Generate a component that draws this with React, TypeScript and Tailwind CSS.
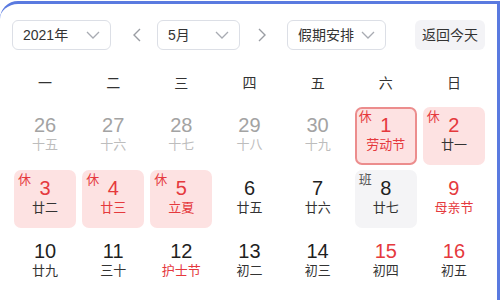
import React from "react";

type Day = {
  n: number;
  lunar: string;
  muted?: boolean;
  redNum?: boolean;
  redLunar?: boolean;
  tag?: "休" | "班";
  selected?: boolean;
};

const WEEK = ["一", "二", "三", "四", "五", "六", "日"];

const DAYS: Day[] = [
  { n: 26, lunar: "十五", muted: true },
  { n: 27, lunar: "十六", muted: true },
  { n: 28, lunar: "十七", muted: true },
  { n: 29, lunar: "十八", muted: true },
  { n: 30, lunar: "十九", muted: true },
  { n: 1, lunar: "劳动节", redNum: true, redLunar: true, tag: "休", selected: true },
  { n: 2, lunar: "廿一", redNum: true, tag: "休" },
  { n: 3, lunar: "廿二", redNum: true, tag: "休" },
  { n: 4, lunar: "廿三", redNum: true, redLunar: true, tag: "休" },
  { n: 5, lunar: "立夏", redNum: true, redLunar: true, tag: "休" },
  { n: 6, lunar: "廿五" },
  { n: 7, lunar: "廿六" },
  { n: 8, lunar: "廿七", tag: "班" },
  { n: 9, lunar: "母亲节", redNum: true, redLunar: true },
  { n: 10, lunar: "廿九" },
  { n: 11, lunar: "三十" },
  { n: 12, lunar: "护士节", redLunar: true },
  { n: 13, lunar: "初二" },
  { n: 14, lunar: "初三" },
  { n: 15, lunar: "初四", redNum: true },
  { n: 16, lunar: "初五", redNum: true },
];

const Chevron = () => (
  <svg width="14" height="8" viewBox="0 0 14 8" fill="none">
    <path d="M1 1 L7 7 L13 1" stroke="#a8abb2" strokeWidth="1.3" />
  </svg>
);

const Select = ({ label, w }: { label: string; w: string }) => (
  <div className={`${w} h-[30px] border border-[#dcdfe6] rounded-[6px] flex items-center justify-between pl-[10px] pr-[10px] text-[14px] text-[#333]`}>
    <span>{label}</span>
    <Chevron />
  </div>
);

const Arrow = ({ dir }: { dir: "l" | "r" }) => (
  <div className="w-[20px] h-[30px] flex items-center justify-center">
    <svg width="8" height="14" viewBox="0 0 8 14" fill="none">
      <path d={dir === "l" ? "M7 1 L1 7 L7 13" : "M1 1 L7 7 L1 13"} stroke="#9a9da3" strokeWidth="1.4" />
    </svg>
  </div>
);

function Cell({ d }: { d: Day }) {
  const bg = d.tag === "休" ? "bg-[#fde2e2]" : d.tag === "班" ? "bg-[#f4f4f6]" : "";
  const border = d.selected ? "border-2 border-[#ec8d8d]" : "border-2 border-transparent";
  const numColor = d.muted ? "text-[#a3a3a3]" : d.redNum ? "text-[#e5393d]" : "text-[#1f1f1f]";
  const lunarColor = d.muted ? "text-[#bdbdbd]" : d.redLunar ? "text-[#e5393d]" : "text-[#333]";
  return (
    <div className={`relative h-[58px] rounded-[7px] ${bg} ${border} flex flex-col items-center pt-[6px]`}>
      {d.tag && (
        <span className={`absolute left-[2px] top-[0px] text-[13px] leading-[16px] ${d.tag === "休" ? "text-[#e5393d]" : "text-[#555]"}`}>
          {d.tag}
        </span>
      )}
      <span className={`text-[20px] leading-[20px] ${numColor}`}>{d.n}</span>
      <span className={`text-[13px] leading-[18px] mt-[1px] ${lunarColor}`}>{d.lunar}</span>
    </div>
  );
}

export default function App() {
  return (
    <div className="w-[500px] h-[300px] overflow-hidden bg-white pt-[1px]" style={{ fontFamily: '"Liberation Sans", "Noto Sans CJK SC", sans-serif' }}>
      <div className="h-[320px] border-t-[3px] border-r-[3px] border-[#5a7ae0] rounded-tl-[18px] pt-[16px] pl-[12px] pr-[12px]">
        <div className="flex items-center">
          <Select label="2021年" w="w-[99px]" />
          <div className="ml-[16px]"><Arrow dir="l" /></div>
          <div className="ml-[10px]"><Select label="5月" w="w-[83px]" /></div>
          <div className="ml-[12px]"><Arrow dir="r" /></div>
          <div className="ml-[15px]"><Select label="假期安排" w="w-[99px]" /></div>
          <div className="ml-auto w-[70px] h-[30px] rounded-[6px] bg-[#f3f3f6] flex items-center justify-center text-[14px] text-[#333]">
            返回今天
          </div>
        </div>
        <div className="pl-[2px]">
          <div className="mt-[21px] h-[24px] grid grid-cols-7 gap-x-[6px] text-[14px] text-[#333]">
            {WEEK.map((w) => (
              <div key={w} className="flex items-center justify-center">{w}</div>
            ))}
          </div>
          <div className="mt-[12px] grid grid-cols-7 gap-x-[6px] gap-y-[5px]">
            {DAYS.map((d, i) => (
              <Cell key={i} d={d} />
            ))}
          </div>
        </div>
      </div>
    </div>
  );
}
